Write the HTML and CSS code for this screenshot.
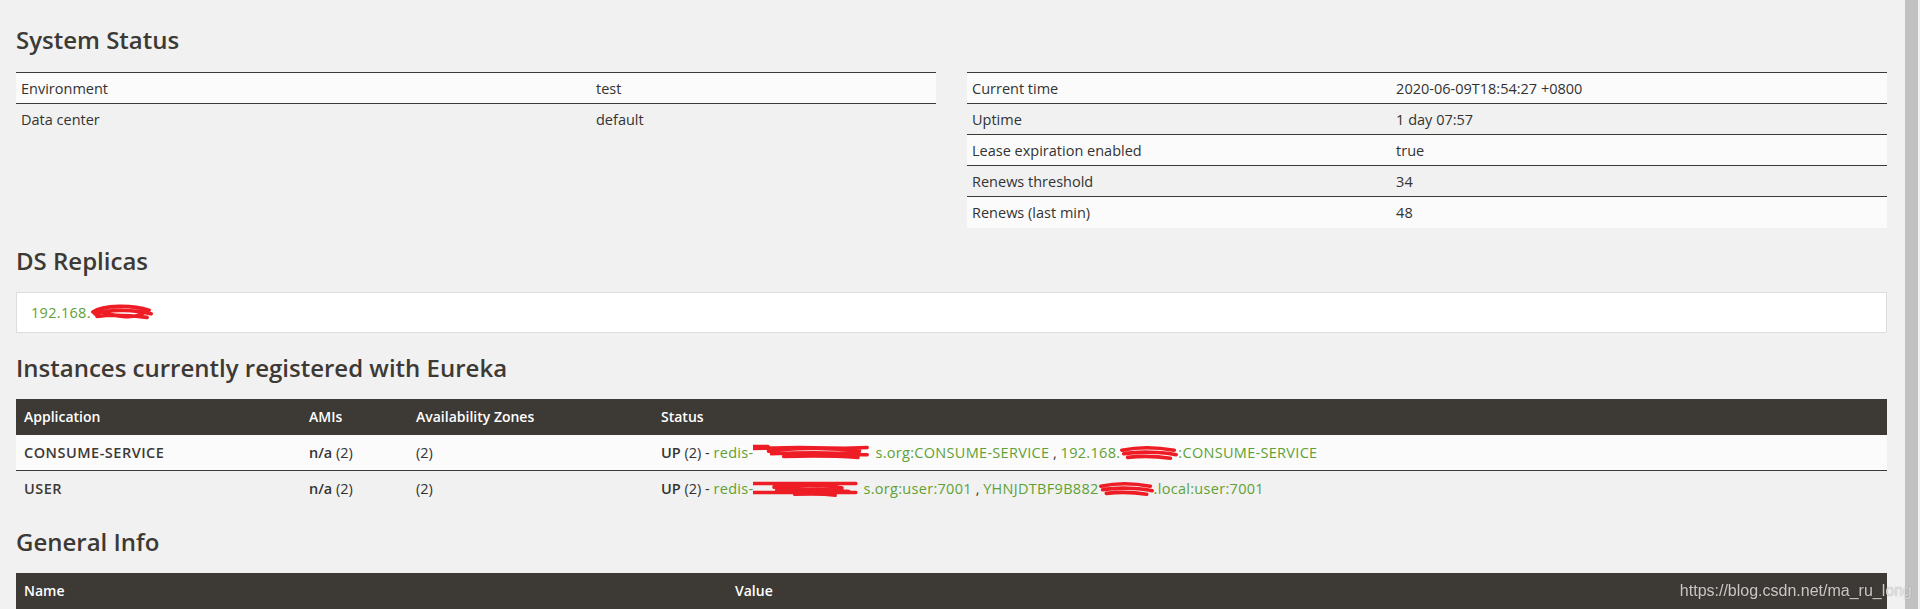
FILE: index.html
```html
<!DOCTYPE html>
<html lang="en">
<head>
  <meta charset="UTF-8">
  <meta name="viewport" content="width=device-width, initial-scale=1.0">
  <title>Eureka</title>
  <link rel="stylesheet" href="styles.css">
</head>
<body>
  <div class="page">
    <h2>System Status</h2>
    <div class="status-row">
      <table class="info info-left">
        <tr><td class="key">Environment</td><td>test</td></tr>
        <tr><td class="key">Data center</td><td>default</td></tr>
      </table>
      <table class="info info-right">
        <tr><td class="key">Current time</td><td>2020-06-09T18:54:27 +0800</td></tr>
        <tr><td class="key">Uptime</td><td>1 day 07:57</td></tr>
        <tr><td class="key">Lease expiration enabled</td><td>true</td></tr>
        <tr><td class="key">Renews threshold</td><td>34</td></tr>
        <tr><td class="key">Renews (last min)</td><td>48</td></tr>
      </table>
    </div>

    <h2>DS Replicas</h2>
    <ul class="replicas">
      <li><a href="#">192.168.<span class="scrib scrib-ip"><svg viewBox="0 0 60 20" preserveAspectRatio="none"><path d="M2 10 C12 2 40 2 56 8 M4 12 C20 6 44 8 58 12 M6 15 C22 12 40 14 54 16 M8 9 C24 16 44 18 52 10"/></svg></span></a></li>
    </ul>

    <h2 class="h-instances">Instances currently registered with Eureka</h2>
    <table class="instances">
      <thead>
        <tr><th class="c-app">Application</th><th class="c-ami">AMIs</th><th class="c-zone">Availability Zones</th><th>Status</th></tr>
      </thead>
      <tbody>
        <tr>
          <td class="app">CONSUME-SERVICE</td>
          <td><b>n/a</b> (2)</td>
          <td>(2)</td>
          <td><b>UP</b> (2) - <a href="#">redis-<span class="scrib scrib-host"><svg viewBox="0 0 160 20" preserveAspectRatio="none"><path d="M0 6 L60 5 L120 6 L150 5 M20 9 C60 4 110 6 140 9 M24 12 C70 10 120 11 150 13 M40 15 C80 14 120 15 138 16 M0 4 L20 4"/></svg></span>s.org:CONSUME-SERVICE</a> , <a href="#">192.168.<span class="scrib scrib-ip2"><svg viewBox="0 0 60 20" preserveAspectRatio="none"><path d="M2 8 C20 4 40 5 56 8 M4 12 C20 9 44 10 58 13 M8 16 C24 14 40 15 52 17"/></svg></span>:CONSUME-SERVICE</a></td>
        </tr>
        <tr>
          <td class="app">USER</td>
          <td><b>n/a</b> (2)</td>
          <td>(2)</td>
          <td><b>UP</b> (2) - <a href="#">redis-<span class="scrib scrib-host2"><svg viewBox="0 0 160 20" preserveAspectRatio="none"><path d="M0 5 L150 5 M0 15 L150 15 M30 9 C70 6 110 7 130 10 M34 12 C80 10 120 12 140 14 M60 17 C90 16 110 17 120 18"/></svg></span>s.org:user:7001</a> , <a href="#">YHNJDTBF9B882<span class="scrib scrib-local"><svg viewBox="0 0 60 20" preserveAspectRatio="none"><path d="M2 8 C20 4 40 5 56 8 M4 12 C20 9 44 10 58 13 M8 16 C24 14 40 15 52 17"/></svg></span>.local:user:7001</a></td>
        </tr>
      </tbody>
    </table>

    <h2 class="h-general">General Info</h2>
    <table class="general">
      <thead>
        <tr><th class="c-name">Name</th><th>Value</th></tr>
      </thead>
    </table>
  </div>

  <!-- browser scrollbar and image watermark -->
  <div class="scrollbar"><div class="thumb"></div></div>
  <div class="watermark">https://blog.csdn.net/ma_ru_long</div>
</body>
</html>
```

FILE: styles.css
```css
* {
  margin: 0;
  padding: 0;
  box-sizing: border-box;
}
html,
body {
  height: 100%;
  overflow: hidden;
}
body {
  background-color: #f1f1f1;
  font-family: "Open Sans", "Liberation Sans", sans-serif;
  font-size: 14.5px;
  color: #333;
}
.page {
  margin-right: 17px;
  padding: 27px 16px 0 16px;
}
h2 {
  font-size: 24px;
  font-weight: 600;
  line-height: 26px;
  color: #3d3935;
  margin: 20px 0 18px 0;
}
h2:first-child {
  margin-top: 0;
  margin-bottom: 19px;
}
h2.h-instances {
  margin-top: 22px;
}
h2.h-general {
  margin-top: 22px;
}
a {
  color: #5fa134;
  text-decoration: none;
  letter-spacing: 0.3px;
}

/* system status */
.status-row {
  display: grid;
  grid-template-columns: 1fr 1fr;
  column-gap: 31px;
  align-items: start;
}
table {
  width: 100%;
  border-collapse: collapse;
}
.info td {
  height: 31px;
  padding: 0 5px;
  border-top: 1px solid #3d3935;
  vertical-align: middle;
}
.info tr:nth-child(odd) {
  background-color: #fbfbfb;
}
.info-left .key {
  width: 62.5%;
}
.info-right .key {
  width: 46.1%;
}

/* replicas */
.replicas {
  list-style: none;
  background-color: #fff;
  border: 1px solid #ddd;
}
.replicas li {
  padding: 10px 14px;
  line-height: 19px;
}

/* redaction marks */
.scrib {
  display: inline-block;
  vertical-align: middle;
  height: 18px;
  margin-top: -4px;
}
.scrib svg {
  width: 100%;
  height: 100%;
  display: block;
}
.scrib path {
  fill: none;
  stroke: #ee1c24;
  stroke-width: 4;
  stroke-linecap: round;
}
.scrib-ip {
  width: 62px;
}
.scrib-host {
  width: 122px;
}
.scrib-host2 {
  width: 110px;
}
.scrib-ip2 {
  width: 58px;
}
.scrib-local {
  width: 55px;
}

/* instances */
.instances th,
.general th {
  background-color: #3d3935;
  color: #fff;
  font-weight: 600;
  font-size: 14px;
  text-align: left;
  height: 36px;
  padding: 0 8px;
}
.instances td {
  height: 36px;
  padding: 0 8px;
  border-top: 1px solid #3d3935;
}
.instances tbody tr:first-child td {
  border-top: none;
}
.instances tbody tr:nth-child(odd) {
  background-color: #fbfbfb;
}
.instances .app {
  font-weight: 600;
  color: #3d3935;
  letter-spacing: 0.5px;
}
.instances b {
  font-weight: 600;
}
.c-app {
  width: 285px;
}
.c-ami {
  width: 107px;
}
.c-zone {
  width: 245px;
}
.c-name {
  width: 711px;
}

/* fake browser scrollbar */
.scrollbar {
  position: fixed;
  top: 0;
  right: 0;
  width: 17px;
  height: 100vh;
  background-color: #f1f1f1;
  padding: 0 2px;
}
.scrollbar .thumb {
  height: 100%;
  background-color: #c1c1c1;
}
.watermark {
  position: fixed;
  right: 8px;
  bottom: 9px;
  font-family: "Liberation Sans", Arial, sans-serif;
  font-size: 16px;
  color: rgba(255, 255, 255, 0.75);
  text-shadow: 0 0 1px rgba(0, 0, 0, 0.5);
}
```
